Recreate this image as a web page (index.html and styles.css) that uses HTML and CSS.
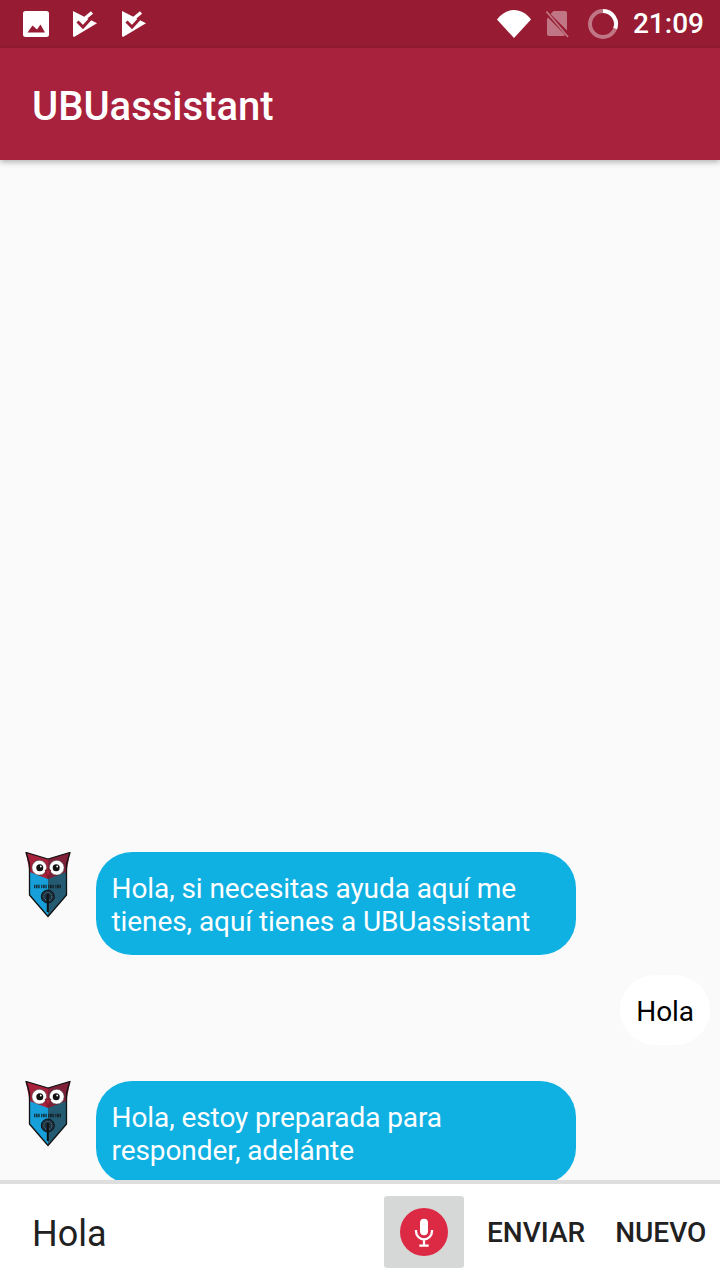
FILE: index.html
```
<!DOCTYPE html>
<html lang="es">
<head>
<meta charset="utf-8">
<title>UBUassistant</title>
<link rel="stylesheet" href="styles.css">
</head>
<body>
<svg class="defs" width="0" height="0" aria-hidden="true">
  <defs>
    <symbol id="owl" viewBox="0 0 46 66">
      <path d="M23 7 L4.500 12 L4.500 43 L23 64Z" fill="#169fd8"/>
      <path d="M23 7 L41.500 12 L41.500 43 L23 64Z" fill="#245b73"/>
      <path d="M1 .5 L23 7 L23 27 L4.500 20 Z" fill="#a8213d"/>
      <path d="M45 .5 L23 7 L23 27 L41.500 20 Z" fill="#7f2038"/>
      <path d="M1 .5 L23 7 L45 .5 L41.500 12 L41.500 43 L23 64.500 L4.500 43 L4.500 12Z" fill="none" stroke="#111" stroke-width="1.300" stroke-linejoin="round"/>
      <circle cx="14.300" cy="15.700" r="7.400" fill="#fff" stroke="#333" stroke-width=".5"/>
      <circle cx="31.700" cy="15.700" r="7.400" fill="#fff" stroke="#333" stroke-width=".5"/>
      <circle cx="14.800" cy="15.700" r="3.500" fill="#111"/>
      <circle cx="31.200" cy="15.700" r="3.500" fill="#111"/>
      <circle cx="15.800" cy="14.500" r=".9" fill="#fff"/>
      <circle cx="32.200" cy="14.500" r=".9" fill="#fff"/>
      <path d="M20 18 H26 L23 26.500Z" fill="#a8213d" stroke="#511" stroke-width=".5"/>
      <path d="M9 34.500H37" stroke="#111" stroke-opacity=".75" stroke-width="3.500" stroke-dasharray="1 .6 2 .6 1.500 1.400"/>
      <circle cx="22.800" cy="44.500" r="6.500" fill="#1a3040" stroke="#111" stroke-width="1"/>
      <circle cx="22.800" cy="44.500" r="4" fill="none" stroke="#8aa" stroke-width=".7" stroke-dasharray="1 1"/>
      <path d="M22.800 42V60" stroke="#111" stroke-width="2"/>
    </symbol>
    <symbol id="chk" viewBox="0 0 25 26">
      <path fill="#fff" d="M0 0 L24 12.300 L1 26 L0 25Z"/>
      <path fill="none" stroke="#971c33" stroke-width="3" d="M4.500 10.500 L10 16 L21 4"/>
      <path fill="none" stroke="#fff" stroke-width="3.300" d="M10.500 8.500 L19 1.500"/>
    </symbol>
  </defs>
</svg>
<div class="screen">
  <div class="status">
    <div class="status-left">
      <svg class="ico-img" viewBox="0 0 26 26"><path fill-rule="evenodd" fill="#fff" d="M2.500 0h21A2.500 2.500 0 0 1 26 2.500v21a2.500 2.500 0 0 1-2.500 2.500h-21A2.500 2.500 0 0 1 0 23.500v-21A2.500 2.500 0 0 1 2.500 0ZM4.500 21.500h17.500L17.500 13.500 14 18.500 9.500 14.500Z"/></svg>
      <svg class="ico-chk"><use href="#chk"/></svg>
      <svg class="ico-chk"><use href="#chk"/></svg>
    </div>
    <div class="status-right">
      <svg class="ico-wifi" viewBox="0 0 34 28"><path fill="#fff" d="M0 9.500C4.500 3.500 10.500 0 17 0s12.500 3.500 17 9.500L17 28Z"/></svg>
      <svg class="ico-sim" viewBox="0 0 24 28"><path fill="#fff" opacity=".4" d="M8.500 1H20a2 2 0 0 1 2 2v17.500L5.500 4ZM3 7.500 L19.500 24.500V26H4a2 2 0 0 1-2-2V9Z"/><path d="M1.500 1.500L23 27" stroke="#fff" stroke-opacity=".4" stroke-width="1.800"/></svg>
      <svg class="ico-batt" viewBox="0 0 32 32"><circle cx="16" cy="16" r="13" fill="none" stroke="#fff" stroke-opacity=".4" stroke-width="4"/><path d="M16 3A13 13 0 0 1 28.200 20.500" fill="none" stroke="#fff" stroke-width="4"/></svg>
      <span class="time">21:09</span>
    </div>
  </div>
  <header class="appbar">UBUassistant</header>
  <main class="messages">
    <div class="row">
      <svg class="owl"><use href="#owl"/></svg>
      <div class="bubble bot">Hola, si necesitas ayuda aquí me tienes, aquí tienes a UBUassistant</div>
    </div>
    <div class="row user">
      <div class="bubble me">Hola</div>
    </div>
    <div class="row last">
      <svg class="owl"><use href="#owl"/></svg>
      <div class="bubble bot">Hola, estoy preparada para responder, adelánte</div>
    </div>
  </main>
  <footer class="inputbar">
    <div class="field">Hola</div>
    <div class="mic-box">
      <div class="mic">
        <svg viewBox="0 0 24 24"><path fill="#fff" d="M12 14.500a3 3 0 0 0 3-3V5a3 3 0 0 0-6 0v6.500a3 3 0 0 0 3 3Z"/><path fill="none" stroke="#fff" stroke-width="1.700" d="M6 10.500v1a6 6 0 0 0 12 0v-1M12 17.500V22M8.500 22.300h7"/></svg>
      </div>
    </div>
    <div class="btn btn-send">ENVIAR</div>
    <div class="btn btn-new">NUEVO</div>
  </footer>
</div>
</body>
</html>
```

FILE: styles.css
```
* { box-sizing: border-box; }
html, body { margin: 0; padding: 0; }
body { width: 720px; height: 1280px; overflow: hidden; font-family: Roboto, "Noto Sans", sans-serif; background: #fafafa; }
.defs { display: block; width: 0; height: 0; }
.screen { width: 720px; height: 1280px; display: flex; flex-direction: column; }

.status { height: 48px; flex: none; background: #971c33; display: flex; justify-content: space-between; align-items: center; padding: 0 16px 0 23px; }
.status-left { display: flex; align-items: center; gap: 24px; }
.status-right { display: flex; align-items: center; }
.ico-img { width: 26px; height: 26px; display: block; }
.ico-chk { width: 25px; height: 26px; display: block; }
.ico-wifi { width: 34px; height: 28px; display: block; }
.ico-sim { width: 24px; height: 28px; display: block; margin-left: 14px; }
.ico-batt { width: 32px; height: 32px; display: block; margin-left: 18px; }
.time { font-size: 28px; font-weight: 500; color: #fff; margin-left: 14px; line-height: 50px; }

.appbar { height: 112px; flex: none; background: #a8213d; color: #fff; font-size: 40px; font-weight: 500; padding-left: 32px; line-height: 118px; box-shadow: 0 2px 6px rgba(0,0,0,.3); position: relative; z-index: 1; }

.messages { flex: 1; min-height: 0; overflow: hidden; display: flex; flex-direction: column; justify-content: flex-end; background: #fafafa; }
.row { display: flex; align-items: flex-start; flex: none; padding-left: 25px; margin-top: 20px; }
.row.user { justify-content: flex-end; padding-right: 10px; }
.row.last { margin-top: 36px; margin-bottom: -4px; }
.owl { width: 46px; height: 66px; flex: none; display: block; }
.bubble { font-size: 28px; line-height: 33px; letter-spacing: -0.08px; }
.bot { width: 480px; margin-left: 25px; padding: 20px 16px 17px 15.500px; border-radius: 36px; background: #0fb0e2; color: #fff; }
.me { padding: 20px 16px 17px; border-radius: 36px; background: #fff; color: #000; }

.inputbar { height: 100px; flex: none; background: #fff; border-top: 4px solid #dedede; display: flex; align-items: center; position: relative; }
.field { width: 384px; padding-left: 32px; font-size: 36px; line-height: 46px; padding-top: 4px; color: #212121; }
.mic-box { width: 80px; height: 72px; background: #d6d8d8; border-radius: 3px; display: flex; align-items: center; justify-content: center; }
.mic { width: 48px; height: 48px; border-radius: 50%; background: #dc2a45; display: flex; align-items: center; justify-content: center; }
.mic svg { width: 32px; height: 32px; display: block; }
.btn { font-size: 28px; font-weight: 500; color: #212121; padding-top: 1px; }
.btn-send { margin-left: 23px; }
.btn-new { margin-left: 30px; }
```
